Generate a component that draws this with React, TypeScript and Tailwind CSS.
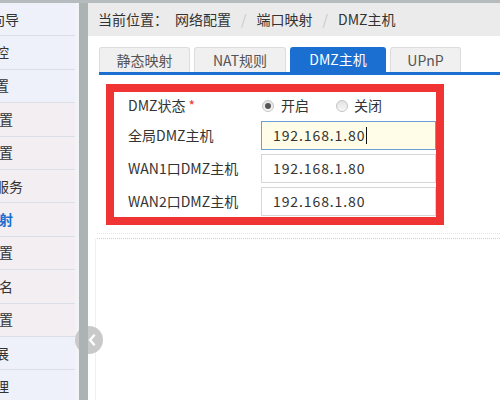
import React from "react";

const FONT = { fontFamily: '"Noto Sans CJK SC", "Noto Sans", sans-serif' };

const items: { label: string; end: number; bg: string; active?: boolean }[] = [
  { label: "设置向导", end: 19, bg: "bg-[#eef1f9]" },
  { label: "流量监控", end: 9, bg: "bg-[#eef1f9]" },
  { label: "网络设置", end: 9, bg: "bg-[#eef1f9]" },
  { label: "无线设置", end: 13, bg: "bg-[#f3eef1]" },
  { label: "安全设置", end: 13, bg: "bg-[#f3eef1]" },
  { label: "DHCP服务", end: 23, bg: "bg-[#f3eef1]" },
  { label: "端口映射", end: 13, bg: "bg-[#f3eef1]", active: true },
  { label: "路由设置", end: 13, bg: "bg-[#f3eef1]" },
  { label: "动态域名", end: 13, bg: "bg-[#f3eef1]" },
  { label: "系统设置", end: 13, bg: "bg-[#f3eef1]" },
  { label: "功能扩展", end: 9, bg: "bg-[#eef1f9]" },
  { label: "系统管理", end: 9, bg: "bg-[#eef1f9]" },
];

function Radio({ checked }: { checked: boolean }) {
  return (
    <span className="w-[12px] h-[12px] rounded-full border border-[#c4c4c4] bg-gradient-to-b from-[#e2e2e2] to-[#f8f8f8] flex items-center justify-center">
      {checked && <span className="w-[6px] h-[6px] rounded-full bg-[#555]" />}
    </span>
  );
}

function Field({ label, active }: { label: string; active?: boolean }) {
  return (
    <div className="flex items-center h-[29px]">
      <div className="w-[147px] pl-[14px] text-[14px] text-[#333] whitespace-nowrap">{label}</div>
      <div
        className={
          "flex-1 h-[29px] flex items-center pl-[11px] text-[14px] text-[#333] tracking-[0.9px] border " +
          (active ? "bg-[#fffde8] border-[#6c9fd3]" : "bg-white border-[#d6d6d6]")
        }
      >
        192.168.1.80
        {active && <span className="w-px h-[17px] bg-[#111] ml-[1px]" />}
      </div>
    </div>
  );
}

export default function App() {
  return (
    <div className="w-[500px] h-[400px] overflow-hidden bg-white flex flex-col" style={FONT}>
      <div className="h-[3px] bg-[#b6bbbe] shrink-0" />
      <div className="flex flex-1 min-h-0">
        {/* sidebar */}
        <div className="w-[79px] shrink-0 bg-[#f1f3f7] pr-[4px] flex flex-col">
          {items.map((it, i) => (
            <div
              key={i}
              className={`h-[33.4px] shrink-0 flex items-center justify-end overflow-hidden whitespace-nowrap border-b border-[#dadee7] text-[14px] ${it.bg} ${
                it.active ? "text-[#1a6fd0] font-bold" : "text-[#333]"
              }`}
              style={{ paddingRight: 75 - it.end }}
            >
              {it.label}
            </div>
          ))}
        </div>
        {/* bar */}
        <div className="w-[9px] shrink-0 bg-[#abb3b3] relative z-10" />
        {/* main */}
        <div className="flex-1 relative flex flex-col">
          <div className="absolute left-[-13px] top-[323px] w-[28px] h-[28px] rounded-full bg-[#c9c9c9] flex items-center justify-end pr-[7px] z-0">
            <svg width="8" height="12" viewBox="0 0 8 12">
              <path d="M6 1.5 L2 6 L6 10.5" stroke="#fff" strokeWidth="2.4" fill="none" strokeLinecap="round" strokeLinejoin="round" />
            </svg>
          </div>
          <div className="h-[33px] shrink-0 bg-[#ebebeb] flex items-center pl-[10px] text-[14px] text-[#333] whitespace-nowrap">
            <span>当前位置：</span>
            <span className="ml-[7px]">网络配置</span>
            <span className="mx-[10px] text-[#c8c8c8]">/</span>
            <span>端口映射</span>
            <span className="mx-[10px] text-[#c8c8c8]">/</span>
            <span>DMZ主机</span>
          </div>
          <div className="pl-[11px] pt-[11px]">
            <div className="flex gap-[4px] border-b-[3px] border-[#1a6fd0] text-[14px]">
              <div className="w-[91px] h-[25px] flex items-center justify-center bg-[#f0f0f0] border border-b-0 border-[#dcdcdc] rounded-t-[3px] text-[#555]">静态映射</div>
              <div className="w-[92px] h-[25px] flex items-center justify-center bg-[#f0f0f0] border border-b-0 border-[#dcdcdc] rounded-t-[3px] text-[#555]">NAT规则</div>
              <div className="w-[96px] h-[25px] flex items-center justify-center bg-[#1a6fd0] rounded-t-[3px] text-white">DMZ主机</div>
              <div className="w-[71px] h-[25px] flex items-center justify-center bg-[#f0f0f0] border border-b-0 border-[#dcdcdc] rounded-t-[3px] text-[#555]">UPnP</div>
            </div>
          </div>
          <div className="pl-[18px] pt-[9px]">
            <div className="w-[338px] border-[8px] border-[#f03434] flex flex-col">
              <div className="h-[27px] flex items-center">
                <div className="w-[147px] pl-[14px] text-[14px] text-[#333]">
                  DMZ状态<span className="text-[#e33] ml-[3px]">*</span>
                </div>
                <div className="flex items-center pl-[1px] text-[14px] text-[#333]">
                  <Radio checked />
                  <span className="ml-[7px]">开启</span>
                  <span className="ml-[27px]"><Radio checked={false} /></span>
                  <span className="ml-[6px]">关闭</span>
                </div>
              </div>
              <div className="h-[2px]" />
              <div className="flex flex-col gap-[4px] pb-[1px]">
                <Field label="全局DMZ主机" active />
                <Field label="WAN1口DMZ主机" />
                <Field label="WAN2口DMZ主机" />
              </div>
            </div>
          </div>
          <div className="ml-[9px] mt-[8px] h-[6px] border-t border-dotted border-[#e6e6e6] border-b border-b-[#cfcfcf]" />
          <div className="ml-[7px] flex-1 border-l border-[#f0f0f0]" />
        </div>
      </div>
    </div>
  );
}
